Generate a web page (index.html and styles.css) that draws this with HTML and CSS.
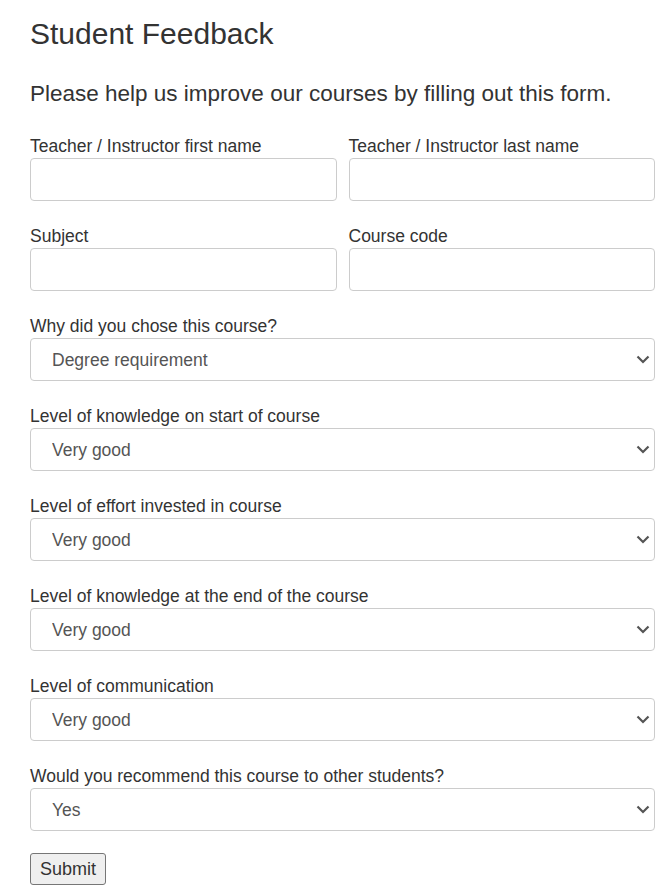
FILE: index.html
```html
<!DOCTYPE html>
<html>
<head>
<meta charset="utf-8">
<link rel="stylesheet" href="styles.css">
</head>
<body>
<div class="container">
  <h1 class="title">Student Feedback</h1>
  <h2 class="subtitle">Please help us improve our courses by filling out this form.</h2>
  <form class="form">
    <div class="row">
      <div class="field">
        <label class="label">Teacher / Instructor first name</label>
        <input class="control" type="text">
      </div>
      <div class="field">
        <label class="label">Teacher / Instructor last name</label>
        <input class="control" type="text">
      </div>
    </div>
    <div class="row">
      <div class="field">
        <label class="label">Subject</label>
        <input class="control" type="text">
      </div>
      <div class="field">
        <label class="label">Course code</label>
        <input class="control" type="text">
      </div>
    </div>
    <div class="field">
      <label class="label">Why did you chose this course?</label>
      <div class="select-wrap">
        <select class="control select"><option>Degree requirement</option></select>
        <svg class="chevron" width="14" height="9" viewBox="0 0 14 9"><path d="M1.5 1.5 L7 7 L12.5 1.5" fill="none" stroke="#555" stroke-width="2.2"/></svg>
      </div>
    </div>
    <div class="field">
      <label class="label">Level of knowledge on start of course</label>
      <div class="select-wrap">
        <select class="control select"><option>Very good</option></select>
        <svg class="chevron" width="14" height="9" viewBox="0 0 14 9"><path d="M1.5 1.5 L7 7 L12.5 1.5" fill="none" stroke="#555" stroke-width="2.2"/></svg>
      </div>
    </div>
    <div class="field">
      <label class="label">Level of effort invested in course</label>
      <div class="select-wrap">
        <select class="control select"><option>Very good</option></select>
        <svg class="chevron" width="14" height="9" viewBox="0 0 14 9"><path d="M1.5 1.5 L7 7 L12.5 1.5" fill="none" stroke="#555" stroke-width="2.2"/></svg>
      </div>
    </div>
    <div class="field">
      <label class="label">Level of knowledge at the end of the course</label>
      <div class="select-wrap">
        <select class="control select"><option>Very good</option></select>
        <svg class="chevron" width="14" height="9" viewBox="0 0 14 9"><path d="M1.5 1.5 L7 7 L12.5 1.5" fill="none" stroke="#555" stroke-width="2.2"/></svg>
      </div>
    </div>
    <div class="field">
      <label class="label">Level of communication</label>
      <div class="select-wrap">
        <select class="control select"><option>Very good</option></select>
        <svg class="chevron" width="14" height="9" viewBox="0 0 14 9"><path d="M1.5 1.5 L7 7 L12.5 1.5" fill="none" stroke="#555" stroke-width="2.2"/></svg>
      </div>
    </div>
    <div class="field last">
      <label class="label">Would you recommend this course to other students?</label>
      <div class="select-wrap">
        <select class="control select"><option>Yes</option></select>
        <svg class="chevron" width="14" height="9" viewBox="0 0 14 9"><path d="M1.5 1.5 L7 7 L12.5 1.5" fill="none" stroke="#555" stroke-width="2.2"/></svg>
      </div>
    </div>
    <button class="submit" type="button">Submit</button>
  </form>
</div>
</body>
</html>
```
FILE: styles.css
```css
html, body {
  margin: 0;
  padding: 0;
  background: #fff;
}
body {
  font-family: "Liberation Sans", Arial, sans-serif;
  color: #333;
}
.container {
  padding: 0 11px 0 30px;
}
.title {
  margin: 0;
  padding-top: 16px;
  font-size: 30px;
  font-weight: 400;
  line-height: 36px;
}
.subtitle {
  margin: 27px 0 0;
  font-size: 22.5px;
  font-weight: 400;
  line-height: 30px;
}
.form {
  margin-top: 26px;
  display: flex;
  flex-direction: column;
}
.row {
  display: grid;
  grid-template-columns: 1fr 1fr;
  column-gap: 12px;
}
.field {
  display: flex;
  flex-direction: column;
  margin-bottom: 24px;
}
.field.last {
  margin-bottom: 22px;
}
.label {
  font-size: 17.5px;
  line-height: 22px;
  margin-bottom: 1px;
}
.control {
  box-sizing: border-box;
  height: 43px;
  width: 100%;
  border: 1px solid #ccc;
  border-radius: 4px;
  background: #fff;
  font-family: "Liberation Sans", Arial, sans-serif;
  font-size: 17.5px;
  color: #555;
  padding: 0 12px;
  margin: 0;
  display: block;
}
.select-wrap {
  position: relative;
}
.select {
  -webkit-appearance: none;
  appearance: none;
  padding: 0 40px 0 21px;
}
.chevron {
  position: absolute;
  right: 5px;
  top: 17px;
  pointer-events: none;
}
.submit {
  align-self: flex-start;
  font-family: "Liberation Sans", Arial, sans-serif;
  font-size: 18px;
  line-height: 22px;
  color: #333;
  padding: 4px 9px;
  margin: 0;
  border: 1px solid #767676;
  border-radius: 3px;
  background: #efefef;
}
```
